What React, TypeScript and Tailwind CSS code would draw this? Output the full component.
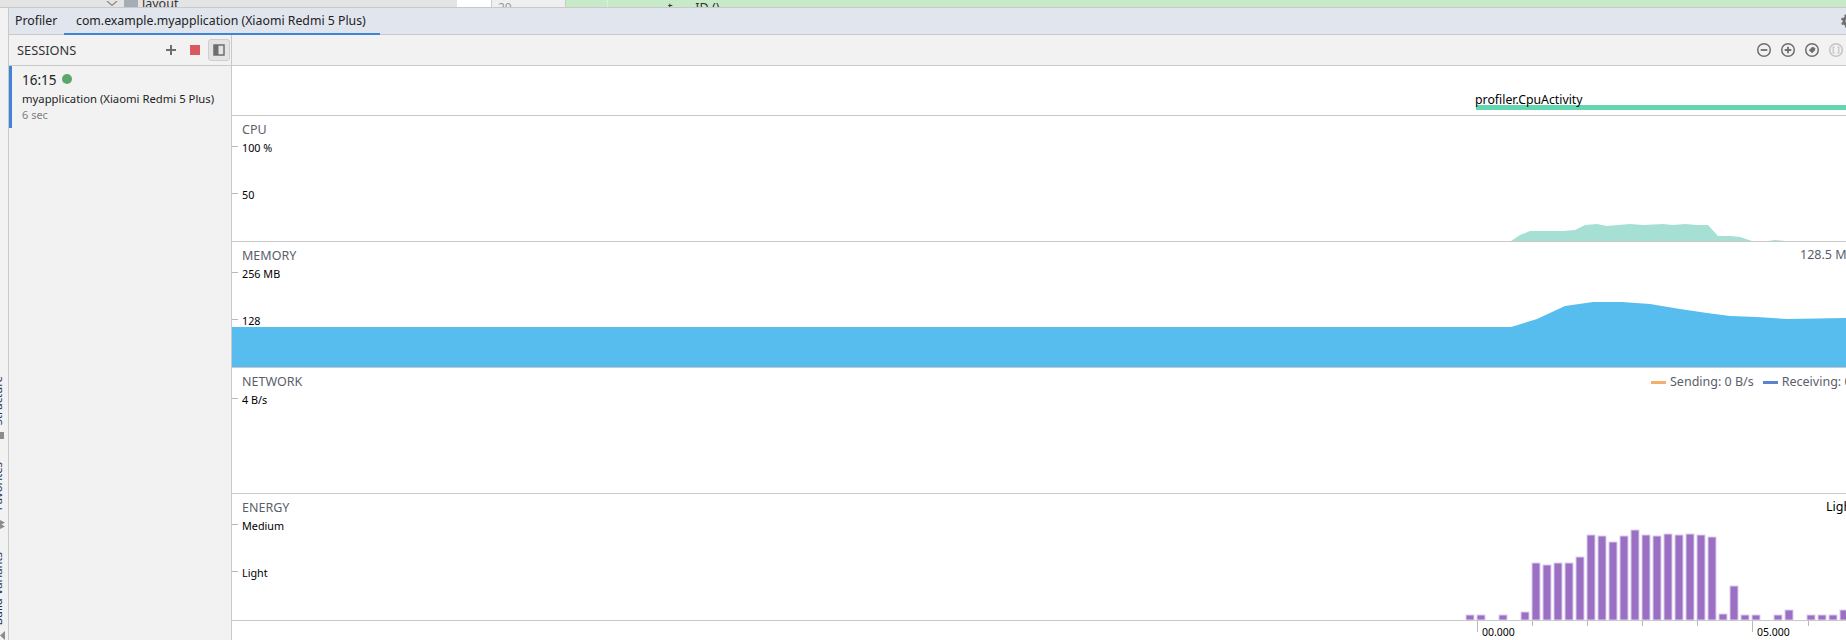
import React from "react";

const FONT = "font-['Noto_Sans',sans-serif]";

const cpuPoints =
  "1511,241 1520,235 1530,231 1563,231 1575,230 1585,225 1597,224 1607,226 1630,224 1643,225 1663,224 1673,225 1685,224 1697,225 1708,225 1718,236 1730,236 1740,237 1752,241 1768,241 1775,240 1785,241";
const memoryPoints =
  "232,367 232,327 1511,327 1537,319 1565,306 1593,302 1622,302 1650,304 1680,309 1707,313 1730,316 1757,317 1787,319 1846,318 1846,367";

// [left in page px, top in page px]
const energyBars = [
  [1466, 615], [1477, 615], [1499, 615], [1521, 612], [1532, 563], [1543, 565], [1554, 563], [1565, 563],
  [1576, 557], [1587, 535], [1598, 536], [1609, 542], [1620, 536], [1631, 530], [1642, 535], [1653, 536],
  [1664, 534], [1675, 535], [1686, 534], [1697, 535], [1708, 537], [1719, 614], [1730, 586], [1741, 615],
  [1752, 615], [1774, 615], [1785, 610], [1807, 615], [1818, 615], [1829, 615], [1840, 610],
];

const axisTicks = [
  { x: 1477, major: true, label: "00.000" },
  { x: 1532 },
  { x: 1587 },
  { x: 1642 },
  { x: 1697 },
  { x: 1752, major: true, label: "05.000" },
  { x: 1808 },
];

function YLabel({ top, children }: { top: number; children: React.ReactNode }) {
  return (
    <div className="absolute left-0 flex items-center" style={{ top }}>
      <span className="w-[6px] h-px bg-[#b8b8b8] mr-[4px] -translate-y-[2px]" />
      <span className="text-[10.8px] leading-[14px] text-black">{children}</span>
    </div>
  );
}

function Track({
  title,
  right,
  chart,
  children,
  height = "h-[126px]",
}: {
  title: string;
  right?: React.ReactNode;
  chart?: React.ReactNode;
  children?: React.ReactNode;
  height?: string;
}) {
  return (
    <div className={`relative ${height} border-b border-[#c9c9c9] bg-white shrink-0 overflow-hidden`}>
      {chart}
      <div className="relative flex items-center justify-between pl-[10px] pt-[6px] text-[12.5px] leading-[16px] text-[#59606a]">
        <span>{title}</span>
        {right}
      </div>
      {children}
    </div>
  );
}

function ZoomIcon({ kind }: { kind: "minus" | "plus" | "reset" | "frame" }) {
  const color = kind === "frame" ? "#c4c4c4" : "#6e6e6e";
  return (
    <svg width="16" height="16" viewBox="0 0 16 16" fill="none" stroke={color} strokeWidth="1.5">
      <circle cx="8" cy="8" r="6.3" />
      {kind === "minus" && <path d="M4.7 8h6.6" strokeWidth="1.8" />}
      {kind === "plus" && <path d="M4.7 8h6.6M8 4.7v6.6" strokeWidth="1.8" />}
      {kind === "reset" && <path d="M4.800 8.300 8.300 4.800l3 1.200-.2 2.200-3 3z" fill={color} stroke="none" />}
      {kind === "frame" && <path d="M6.600 5.200H5.200v5.600h1.400M9.400 5.200h1.400v5.600H9.400" strokeWidth="1.2" />}
    </svg>
  );
}

function SideLabel({ text, className }: { text: string; className: string }) {
  return (
    <div className={`${className} h-max rotate-180 [writing-mode:vertical-rl] text-[11.3px] leading-[14px] text-[#1d3557] whitespace-nowrap -ml-[9px]`}>
      {text}
    </div>
  );
}

export default function App() {
  return (
    <div className={`relative w-[1846px] h-[640px] overflow-hidden flex flex-col bg-[#f2f2f2] ${FONT}`}>
      {/* editor left over above the tool window */}
      <div className="h-[8px] shrink-0 flex border-b border-[#c9c9c9] overflow-hidden">
        <div className="w-[457px] bg-[#e4e4e4] flex items-start pl-[105px]">
          <svg width="14" height="7" viewBox="0 0 14 7" fill="none" stroke="#8c8c8c" strokeWidth="1.3" className="mt-[1px]">
            <path d="M2 0l5 4.500 5-4.500" />
          </svg>
          <span className="w-[14px] h-[7px] bg-[#a6adb5] ml-[5px]" />
          <span className="ml-[4px] text-[12.5px] leading-[14px] -mt-[3px] text-[#333]">layout</span>
        </div>
        <div className="w-[35px] bg-white border-r border-[#c9c9c9]" />
        <div className="w-[74px] bg-[#efefef] border-r border-[#c9c9c9] pl-[6px] pt-[1px] text-[12px] leading-[14px] text-[#999]">20</div>
        <div className="w-[42px] bg-[#c7ebc9] border-r border-[#dceedd]" />
        <div className="flex-1 bg-[#c7ebc9] pl-[60px] pt-[1px] text-[12.5px] leading-[14px] text-[#333] whitespace-pre">t.      ID ()</div>
      </div>

      <div className="flex-1 flex min-h-0">
        {/* left tool strip, labels cut by the window edge */}
        <div className="w-[9px] shrink-0 border-r border-[#c9c9c9] bg-[#f2f2f2] overflow-hidden flex flex-col pt-[368px]">
          <SideLabel text="Structure" className="mt-0" />
          <span className="w-[4px] h-[9px] bg-[#8c8c8c] mt-[7px]" />
          <SideLabel text="Favorites" className="mt-[23px]" />
          <svg width="5" height="9" viewBox="0 0 5 9" fill="#8c8c8c" className="mt-[9px] shrink-0">
            <path d="M0 0 5 2.500 1.500 4.500 5 6.500 0 9z" />
          </svg>
          <SideLabel text="Build Variants" className="mt-[23px]" />
          <svg width="5" height="9" viewBox="0 0 5 9" fill="#8c8c8c" className="mt-[6px] shrink-0">
            <path d="M0 4.500 5 0v9z" />
          </svg>
        </div>

        <div className="flex-1 min-w-0 flex flex-col">
          {/* tab bar */}
          <div className="h-[27px] shrink-0 bg-[#e1e5ee] border-b border-[#c9c9c9] flex items-end pl-[6px]">
            <span className="text-[12.3px] leading-[26px] text-[#222] w-[49px] whitespace-nowrap">Profiler</span>
            <span className="text-[12.3px] leading-[24px] text-[#222] w-[316px] pl-[12px] border-b-[2px] border-[#4083d9] -mb-[1px] whitespace-nowrap">
              com.example.myapplication (Xiaomi Redmi 5 Plus)
            </span>
          </div>

          <div className="flex-1 flex min-h-0">
            {/* sessions panel */}
            <div className="w-[223px] shrink-0 border-r border-[#c9c9c9] flex flex-col">
              <div className="h-[31px] shrink-0 border-b border-[#c9c9c9] flex items-center pl-[8px] pr-[1px]">
                <span className="text-[12.8px] text-[#333] flex-1 pt-[2px]">SESSIONS</span>
                <svg width="12" height="12" viewBox="0 0 12 12" stroke="#6e6e6e" strokeWidth="2" className="mr-[13px]">
                  <path d="M1 6h10M6 1v10" />
                </svg>
                <span className="w-[10px] h-[10px] bg-[#db5860] mr-[8px]" />
                <span className="w-[22px] h-[22px] rounded-[3px] bg-[#e4e4e4] border border-[#cfcfcf] flex items-center justify-center">
                  <svg width="12" height="12" viewBox="0 0 12 12">
                    <rect x="1" y="1" width="10" height="10" fill="none" stroke="#6e6e6e" strokeWidth="1.500" />
                    <rect x="1" y="1" width="4.500" height="10" fill="#6e6e6e" />
                  </svg>
                </span>
              </div>
              <div className="h-[62px] border-l-[3px] border-[#4083d9] pl-[10px] pt-[4px]">
                <div className="flex items-center text-[13.500px] leading-[20px] text-[#222]">
                  16:15
                  <span className="w-[10px] h-[10px] rounded-full bg-[#59a869] ml-[5px] -mt-[2px]" />
                </div>
                <div className="text-[11.3px] leading-[17px] text-[#222] whitespace-nowrap">myapplication (Xiaomi Redmi 5 Plus)</div>
                <div className="text-[11px] leading-[16px] text-[#808080]">6 sec</div>
              </div>
            </div>

            {/* timeline */}
            <div className="flex-1 min-w-0 flex flex-col">
              <div className="h-[31px] shrink-0 border-b border-[#c9c9c9] flex items-center justify-end gap-[8px] pr-[2px]">
                <ZoomIcon kind="minus" />
                <ZoomIcon kind="plus" />
                <ZoomIcon kind="reset" />
                <ZoomIcon kind="frame" />
              </div>

              {/* activity row */}
              <div className="relative h-[50px] shrink-0 border-b border-[#c9c9c9] bg-white overflow-hidden">
                <div className="absolute left-[1244px] right-0 bottom-[5px] h-[5px] bg-[#62d5b1]" />
                <span className="absolute left-[1243px] top-[25px] text-[12.3px] leading-[18px] text-black">profiler.CpuActivity</span>
              </div>

              <Track
                title="CPU"
                chart={
                  <svg className="absolute inset-0" width="1614" height="125" viewBox="232 116 1614 125">
                    <polygon points={cpuPoints} fill="#a6e0d5" />
                  </svg>
                }
              >
                <YLabel top={25}>100 %</YLabel>
                <YLabel top={72}>50</YLabel>
              </Track>

              <Track
                title="MEMORY"
                right={<span className="absolute left-[1568px] top-[5px] whitespace-nowrap">128.5 MB</span>}
                chart={
                  <svg className="absolute inset-0" width="1614" height="125" viewBox="232 242 1614 125">
                    <polygon points={memoryPoints} fill="#57bdee" />
                  </svg>
                }
              >
                <YLabel top={25}>256 MB</YLabel>
                <YLabel top={72}>128</YLabel>
              </Track>

              <Track
                title="NETWORK"
                right={
                  <div className="absolute left-[1419px] top-[6px] flex items-center whitespace-nowrap">
                    <span className="w-[15px] h-[3px] bg-[#f4af6f] mr-[4px]" />
                    <span>Sending: 0 B/s</span>
                    <span className="w-[15px] h-[3px] bg-[#5b84cf] ml-[9px] mr-[4px]" />
                    <span>Receiving: 0 B/s</span>
                  </div>
                }
              >
                <YLabel top={25}>4 B/s</YLabel>
              </Track>

              <Track
                title="ENERGY"
                height="h-[127px]"
                right={<span className="absolute left-[1594px] top-[5px] text-black">Light</span>}
                chart={
                  <svg className="absolute inset-0" width="1614" height="126" viewBox="232 494 1614 126">
                    {energyBars.map(([x, y]) => (
                      <rect key={x} x={x} y={y} width={8} height={620 - y} fill="#9a6fc4" stroke="#dccdec" strokeWidth="1" />
                    ))}
                  </svg>
                }
              >
                <YLabel top={25}>Medium</YLabel>
                <YLabel top={72}>Light</YLabel>
              </Track>

              {/* time axis */}
              <div className="relative flex-1 bg-white overflow-hidden">
                {axisTicks.map((t) => (
                  <div key={t.x} className="absolute top-0 flex" style={{ left: t.x - 232 }}>
                    <span className={`w-px bg-[#b8b8b8] ${t.major ? "h-[11px]" : "h-[5px]"}`} />
                    {t.label && <span className="ml-[4px] mt-[4px] text-[10.5px] leading-[14px] text-black">{t.label}</span>}
                  </div>
                ))}
              </div>
            </div>
          </div>
        </div>
      </div>

      {/* gear cut by the right edge */}
      <svg className="absolute left-[1841px] top-[14px]" width="5" height="14" viewBox="0 0 5 14" fill="none" stroke="#6e6e6e">
        <circle cx="7" cy="7" r="4" strokeWidth="3" />
        <circle cx="7" cy="7" r="6" strokeWidth="2" strokeDasharray="2.400 2.400" />
      </svg>
    </div>
  );
}
